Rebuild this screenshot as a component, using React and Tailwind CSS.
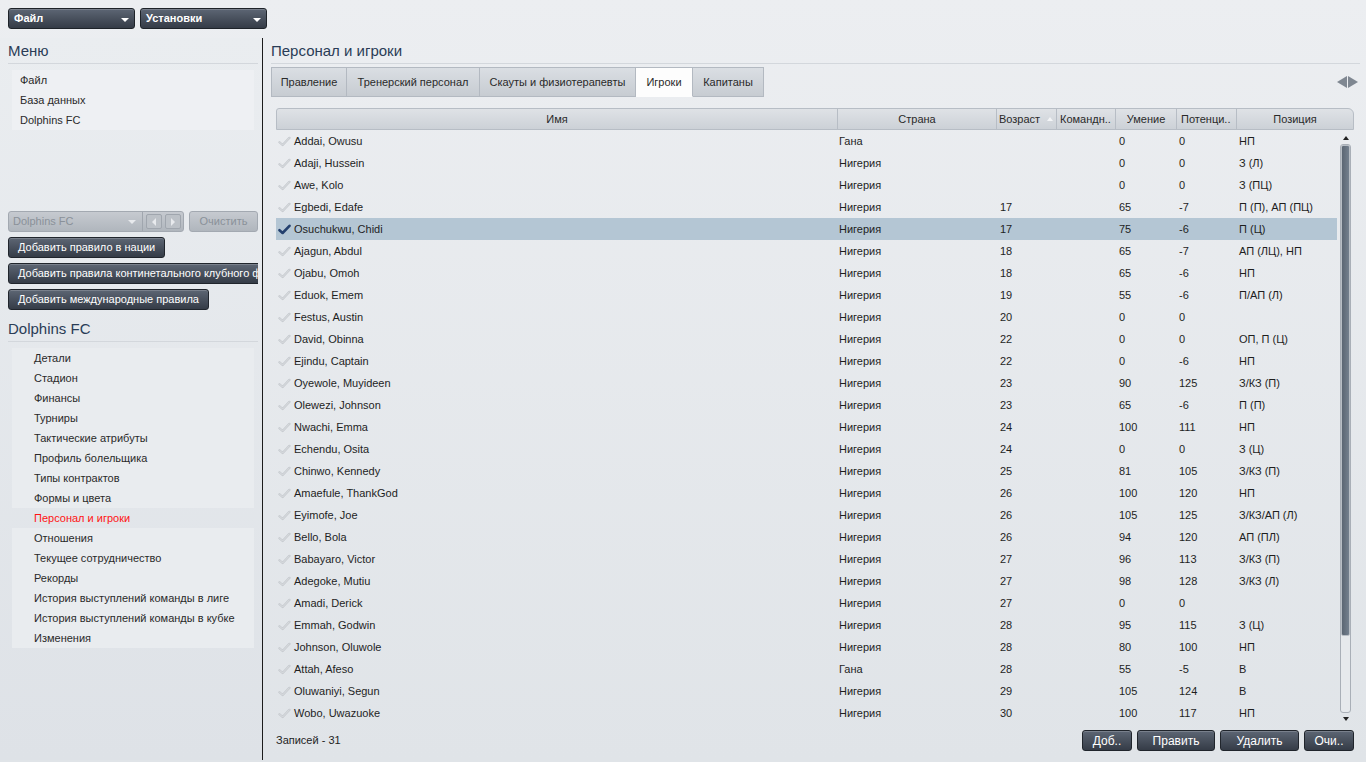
import React from "react";

const players = [
  ["Addai, Owusu", "Гана", "", "0", "0", "НП"],
  ["Adaji, Hussein", "Нигерия", "", "0", "0", "З (Л)"],
  ["Awe, Kolo", "Нигерия", "", "0", "0", "З (ПЦ)"],
  ["Egbedi, Edafe", "Нигерия", "17", "65", "-7", "П (П), АП (ПЦ)"],
  ["Osuchukwu, Chidi", "Нигерия", "17", "75", "-6", "П (Ц)"],
  ["Ajagun, Abdul", "Нигерия", "18", "65", "-7", "АП (ЛЦ), НП"],
  ["Ojabu, Omoh", "Нигерия", "18", "65", "-6", "НП"],
  ["Eduok, Emem", "Нигерия", "19", "55", "-6", "П/АП (Л)"],
  ["Festus, Austin", "Нигерия", "20", "0", "0", ""],
  ["David, Obinna", "Нигерия", "22", "0", "0", "ОП, П (Ц)"],
  ["Ejindu, Captain", "Нигерия", "22", "0", "-6", "НП"],
  ["Oyewole, Muyideen", "Нигерия", "23", "90", "125", "З/КЗ (П)"],
  ["Olewezi, Johnson", "Нигерия", "23", "65", "-6", "П (П)"],
  ["Nwachi, Emma", "Нигерия", "24", "100", "111", "НП"],
  ["Echendu, Osita", "Нигерия", "24", "0", "0", "З (Ц)"],
  ["Chinwo, Kennedy", "Нигерия", "25", "81", "105", "З/КЗ (П)"],
  ["Amaefule, ThankGod", "Нигерия", "26", "100", "120", "НП"],
  ["Eyimofe, Joe", "Нигерия", "26", "105", "125", "З/КЗ/АП (Л)"],
  ["Bello, Bola", "Нигерия", "26", "94", "120", "АП (ПЛ)"],
  ["Babayaro, Victor", "Нигерия", "27", "96", "113", "З/КЗ (П)"],
  ["Adegoke, Mutiu", "Нигерия", "27", "98", "128", "З/КЗ (Л)"],
  ["Amadi, Derick", "Нигерия", "27", "0", "0", ""],
  ["Emmah, Godwin", "Нигерия", "28", "95", "115", "З (Ц)"],
  ["Johnson, Oluwole", "Нигерия", "28", "80", "100", "НП"],
  ["Attah, Afeso", "Гана", "28", "55", "-5", "В"],
  ["Oluwaniyi, Segun", "Нигерия", "29", "105", "124", "В"],
  ["Wobo, Uwazuoke", "Нигерия", "30", "100", "117", "НП"],
];

const clubMenu = [
  "Детали",
  "Стадион",
  "Финансы",
  "Турниры",
  "Тактические атрибуты",
  "Профиль болельщика",
  "Типы контрактов",
  "Формы и цвета",
  "Персонал и игроки",
  "Отношения",
  "Текущее сотрудничество",
  "Рекорды",
  "История выступлений команды в лиге",
  "История выступлений команды в кубке",
  "Изменения",
];

const tabs = [
  ["Правление", "w-[76px]"],
  ["Тренерский персонал", "w-[133px]"],
  ["Скауты и физиотерапевты", "w-[156px]"],
  ["Игроки", "w-[57px]"],
  ["Капитаны", "w-[71px]"],
];

const DarkButton = ({ children, className = "" }) => (
  <button
    className={`h-[21px] rounded-[3px] border border-[#20252c] bg-linear-to-b from-[#5d6674] to-[#353c47] text-[11px] text-white shadow-[inset_0_1px_0_rgba(255,255,255,0.18)] whitespace-nowrap overflow-hidden ${className}`}
  >
    {children}
  </button>
);

const Check = ({ active }) => (
  <svg width="13" height="11" viewBox="0 0 13 11" className="shrink-0">
    <path
      d="M1.5 6.2 L4.6 9 L11.5 1.8"
      fill="none"
      stroke={active ? "#24406e" : "#c2c6cb"}
      strokeWidth={active ? 2.6 : 2.2}
      strokeLinecap="round"
      strokeLinejoin="round"
    />
    {!active && (
      <path
        d="M1.5 6.2 L4.6 9 L11.5 1.8"
        fill="none"
        stroke="#e6e8eb"
        strokeWidth="0.8"
        strokeLinecap="round"
        strokeLinejoin="round"
      />
    )}
  </svg>
);

const Heading = ({ children }) => (
  <h2 className="pt-[4px] pb-[3px] text-[15px] leading-[18px] text-[#2a3c56] border-b border-[#d3d7dc]">
    {children}
  </h2>
);

function LeftPanel() {
  return (
    <div className="w-[263px] shrink-0 border-r border-[#1c1c1c] pl-2 pr-1 bg-linear-to-b from-[#eaedf0] to-[#dee2e7]">
      <Heading>Меню</Heading>
      <div className="mx-1 mt-[6px] bg-[#eef0f3]">
        {["Файл", "База данных", "Dolphins FC"].map((t) => (
          <div key={t} className="h-[20px] flex items-center pl-2 text-[11px] text-[#2a2a2a]">
            {t}
          </div>
        ))}
      </div>

      <div className="mt-[81px] flex items-center gap-[5px]">
        <div className="flex h-[21px] w-[176px] items-center rounded-[3px] border border-[#a3a9b1] bg-linear-to-b from-[#c6cad0] to-[#b0b6bd]">
          <span className="flex-1 pl-1 text-[11px] text-[#8a9199]">Dolphins FC</span>
          <span className="mr-[6px] h-0 w-0 border-x-[4px] border-x-transparent border-t-[4px] border-t-[#e8eaed]" />
          <span className="h-full w-px bg-[#a0a6ae]" />
          <span className="mx-[3px] flex h-[15px] w-[16px] items-center justify-center rounded-[2px] border border-[#a0a6ae] bg-[#bcc1c7]">
            <span className="h-0 w-0 border-y-[4px] border-y-transparent border-r-[4px] border-r-[#e8eaed]" />
          </span>
          <span className="mr-[2px] flex h-[15px] w-[16px] items-center justify-center rounded-[2px] border border-[#a0a6ae] bg-[#bcc1c7]">
            <span className="h-0 w-0 border-y-[4px] border-y-transparent border-l-[4px] border-l-[#e8eaed]" />
          </span>
        </div>
        <div className="flex h-[21px] w-[69px] items-center justify-center rounded-[3px] border border-[#a3a9b1] bg-linear-to-b from-[#c6cad0] to-[#b0b6bd] text-[11px] text-[#8a9199]">
          Очистить
        </div>
      </div>

      <div className="mt-[5px] flex flex-col items-start gap-[5px] overflow-hidden">
        <DarkButton className="w-[157px] px-[9px] text-left">Добавить правило в нации</DarkButton>
        <DarkButton className="w-[260px] shrink-0 px-[9px] text-left">
          Добавить правила континетального клубного ф
        </DarkButton>
        <DarkButton className="w-[201px] px-[9px] text-left">Добавить международные правила</DarkButton>
      </div>

      <div className="mt-[6px]">
        <Heading>Dolphins FC</Heading>
      </div>
      <div className="mx-1 mt-[6px] pb-[2px]">
        {clubMenu.map((t) => {
          const sel = t === "Персонал и игроки";
          return (
            <div
              key={t}
              className={`h-[20px] flex items-center pl-[22px] text-[11px] ${
                sel ? "text-[#ff1414]" : "bg-[#e9ecef] text-[#2a2a2a]"
              }`}
            >
              {t}
            </div>
          );
        })}
      </div>
    </div>
  );
}

const cols = ["w-[562px]", "w-[159px]", "w-[60px]", "w-[59px]", "w-[61px]", "w-[60px]"];

function Scrollbar() {
  return (
    <div className="flex w-[17px] flex-col items-center pt-[6px] pb-[3px]">
      <span className="h-0 w-0 border-x-[3px] border-x-transparent border-b-[4px] border-b-[#222]" />
      <div className="mt-[4px] flex w-[11px] flex-1 flex-col rounded-[3px] border border-[#a9afb7] bg-[#e6e9ec]">
        <div className="h-[491px] rounded-[2px] border border-[#b8bec5] bg-linear-to-r from-[#5b6673] to-[#74808e]" />
      </div>
      <span className="mt-[4px] h-0 w-0 border-x-[3px] border-x-transparent border-t-[4px] border-t-[#222]" />
    </div>
  );
}

function PlayersTable() {
  return (
    <div className="ml-[5px] mr-[6px] mt-[11px]">
      <div className="flex h-[22px] rounded-tl-[3px] rounded-tr-[6px] border border-[#b7bdc5] bg-linear-to-b from-[#dfe2e6] to-[#ccd1d7] text-[11px] text-[#2a2a2a]">
        <div className="flex w-[561px] items-center justify-center border-r border-[#b7bdc5]">Имя</div>
        <div className="flex w-[159px] items-center justify-center border-r border-[#b7bdc5]">Страна</div>
        <div className="flex w-[60px] items-center border-r border-[#b7bdc5] pl-[2px]">
          Возраст
          <span className="ml-[7px] h-0 w-0 border-x-[3px] border-x-transparent border-b-[4px] border-b-[#f4f5f7]" />
        </div>
        <div className="flex w-[59px] items-center border-r border-[#b7bdc5] pl-[3px]">Командн..</div>
        <div className="flex w-[61px] items-center justify-center border-r border-[#b7bdc5]">Умение</div>
        <div className="flex w-[60px] items-center border-r border-[#b7bdc5] pl-[4px]">Потенци..</div>
        <div className="flex flex-1 items-center justify-center">Позиция</div>
      </div>
      <div className="flex">
        <div className="w-[1061px]">
          {players.map((p, i) => {
            const sel = i === 4;
            return (
              <div
                key={p[0]}
                className={`flex h-[22px] items-center text-[11px] text-[#1e1e1e] ${sel ? "bg-[#b4c6d4]" : ""}`}
              >
                <div className={`${cols[0]} flex items-center gap-[3px] pl-[2px]`}>
                  <Check active={sel} />
                  <span>{p[0]}</span>
                </div>
                <div className={`${cols[1]} pl-px`}>{p[1]}</div>
                <div className={`${cols[2]} pl-[3px]`}>{p[2]}</div>
                <div className={cols[3]} />
                <div className={`${cols[4]} pl-[3px]`}>{p[3]}</div>
                <div className={`${cols[5]} pl-[2px]`}>{p[4]}</div>
                <div className="flex-1 pl-[2px] whitespace-nowrap">{p[5]}</div>
              </div>
            );
          })}
        </div>
        <Scrollbar />
      </div>
      <div className="mt-[6px] flex h-[21px] items-center text-[11px] text-[#1e1e1e]">
        <span>Записей - 31</span>
        <div className="ml-auto flex gap-[5px]">
          <DarkButton className="w-[50px] text-[12px]">Доб..</DarkButton>
          <DarkButton className="w-[78px] text-[12px]">Править</DarkButton>
          <DarkButton className="w-[79px] text-[12px]">Удалить</DarkButton>
          <DarkButton className="w-[50px] text-[12px]">Очи..</DarkButton>
        </div>
      </div>
    </div>
  );
}

function RightPanel() {
  return (
    <div className="flex-1 pl-2 pr-[6px]">
      <Heading>Персонал и игроки</Heading>
      <div className="mt-[3px] flex h-[30px] items-center">
        {tabs.map(([t, w]) => {
          const act = t === "Игроки";
          return (
            <div
              key={t}
              className={`${w} flex h-full items-center justify-center border border-l-0 first:border-l border-[#b3b9c1] text-[11px] text-[#2a2a2a] ${
                act ? "bg-[#fdfdfd] border-b-[#fdfdfd]" : "bg-linear-to-b from-[#dadee3] to-[#c7ccd2]"
              }`}
            >
              {t}
            </div>
          );
        })}
        <div className="ml-auto mr-[2px] flex items-center gap-px">
          <span className="h-0 w-0 border-y-[6px] border-y-transparent border-r-[10px] border-r-[#7f8791]" />
          <span className="h-0 w-0 border-y-[6px] border-y-transparent border-l-[10px] border-l-[#7f8791]" />
        </div>
      </div>
      <PlayersTable />
    </div>
  );
}

export default function App() {
  return (
    <div className="h-[768px] w-[1366px] bg-white font-['Liberation_Sans',Arial,sans-serif]">
      <div className="flex h-[762px] flex-col bg-linear-to-b from-[#eceef1] to-[#e0e4e8]">
        <div className="flex h-[30px] gap-[5px] pl-2 pt-2">
          {[
            ["Файл", "w-[127px]"],
            ["Установки", "w-[127px]"],
          ].map(([t, w]) => (
            <div
              key={t}
              className={`${w} flex h-[21px] items-center rounded-[3px] border border-[#1e2329] bg-linear-to-b from-[#5d6674] to-[#353c47] px-[5px] text-[11px] font-bold text-white shadow-[inset_0_1px_0_rgba(255,255,255,0.18)]`}
            >
              <span className="flex-1">{t}</span>
              <span className="mt-[2px] h-0 w-0 border-x-[4px] border-x-transparent border-t-[4px] border-t-white" />
            </div>
          ))}
        </div>
        <div className="flex flex-1 pt-2 pb-[2px]">
          <LeftPanel />
          <RightPanel />
        </div>
      </div>
    </div>
  );
}
